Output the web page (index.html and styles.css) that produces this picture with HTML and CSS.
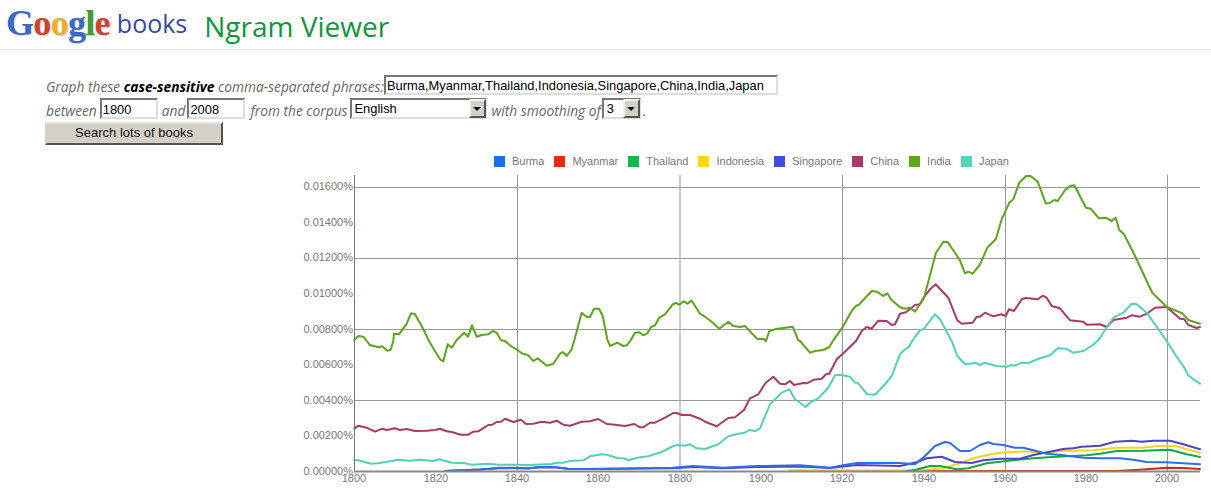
FILE: index.html
```html
<!DOCTYPE html>
<html lang="en">
<head>
    <meta charset="UTF-8">
    <title>Google Books Ngram Viewer</title>
    <link rel="stylesheet" href="styles.css">
</head>
<body>
    <div class="header">
        <div class="logo"><span class="c-blue">G</span><span class="c-red">o</span><span class="c-yellow">o</span><span class="c-blue">g</span><span class="c-green">l</span><span class="c-red">e</span></div>
        <div class="books">books</div>
        <h1>Ngram Viewer</h1>
    </div>

    <form class="query">
        <div class="row row-phrases">
            <label>Graph these <b>case-sensitive</b> comma-separated phrases:</label>
            <input class="phrases" type="text" value="Burma,Myanmar,Thailand,Indonesia,Singapore,China,India,Japan">
        </div>
        <div class="row row-years">
            <label class="between">between</label>
            <input class="year" type="text" value="1800">
            <label class="and">and</label>
            <input class="year" type="text" value="2008">
            <label class="corpus-label">from the corpus</label>
            <div class="select corpus"><span>English</span><i class="arrow"></i></div>
            <label class="smoothing-label">with smoothing of</label>
            <div class="select smoothing"><span>3</span><i class="arrow"></i></div>
            <label class="dot">.</label>
        </div>
        <button type="button">Search lots of books</button>
    </form>

    <div class="chart">
        <ul class="legend">
            <li><i class="swatch burma"></i>Burma</li>
            <li><i class="swatch myanmar"></i>Myanmar</li>
            <li><i class="swatch thailand"></i>Thailand</li>
            <li><i class="swatch indonesia"></i>Indonesia</li>
            <li><i class="swatch singapore"></i>Singapore</li>
            <li><i class="swatch china"></i>China</li>
            <li><i class="swatch india"></i>India</li>
            <li><i class="swatch japan"></i>Japan</li>
        </ul>
        <svg class="plot" width="921" height="326" viewBox="290 172 921 326">
            <g class="grid">
                <path d="M517.5 174V470M680 174V470M842.5 174V470M1005.5 174V470M1167.5 174V470"/>
                <path d="M354 186.5H1200M354 257.5H1200M354 328.5H1200M354 399.5H1200"/>
            </g>
            <g class="ylabels">
                <text x="353" y="189">0.01600%</text>
                <text x="353" y="225">0.01400%</text>
                <text x="353" y="260">0.01200%</text>
                <text x="353" y="296">0.01000%</text>
                <text x="353" y="332">0.00800%</text>
                <text x="353" y="367">0.00600%</text>
                <text x="353" y="403">0.00400%</text>
                <text x="353" y="438">0.00200%</text>
                <text x="353" y="474">0.00000%</text>
            </g>
            <g class="xlabels">
                <text x="354" y="481">1800</text>
                <text x="436" y="481">1820</text>
                <text x="517" y="481">1840</text>
                <text x="598" y="481">1860</text>
                <text x="680" y="481">1880</text>
                <text x="761" y="481">1900</text>
                <text x="842" y="481">1920</text>
                <text x="924" y="481">1940</text>
                <text x="1005" y="481">1960</text>
                <text x="1086" y="481">1980</text>
                <text x="1167" y="481">2000</text>
            </g>
            <polyline class="line myanmar" points="900,470 1116.7,470 1140,468.7 1166.7,466.7 1183.3,467 1200,468"/>
            <polyline class="line indonesia" points="790,469.3 906.7,469.5 926.7,468.7 943.3,467.3 956.7,463.3 975,456.7 993.3,452.7 1010,451 1025,450.3 1043.3,452 1063.3,450 1093.3,449.3 1116.7,446.7 1143.3,446.7 1156.7,445 1176.7,445.3 1186.7,448.3 1200,451.7"/>
            <polyline class="line thailand" points="906.7,470 915,469 930,465 940,465 956.7,468.3 968.3,467.3 986.7,462.3 1006.7,460 1033.3,457.3 1056.7,455.7 1086.7,454.3 1100,452.7 1116.7,450 1143.3,449.7 1170,448.7 1186.7,453.3 1200,456"/>
            <polyline class="line singapore" points="445,470 480,468.5 501.7,466.7 528,467.3 538,466.5 555,466.5 568,467.7 590,468 673,467.2 693,466 723,467.2 757,466 800,465.5 830,467 843,465.5 857,464 900,465 916.7,461.3 926.7,457.3 941.7,455.7 955,461 971.7,462 983.3,459.3 1000,457.7 1020,457.7 1033.3,454 1048.3,451 1063.3,448 1073.3,447.3 1081.7,445.7 1100,444.7 1115,440.7 1131.7,439.7 1141.7,440.7 1153.3,439.7 1170,439.7 1183.3,443.3 1200,448.3"/>
            <polyline class="line burma" points="445,470 480,468.5 501.7,467 528,467.5 538,466 555,466 568,467.7 590,468 673,466.7 693,465 723,466.7 757,465 800,464.3 830,466.7 843,464.3 857,462 900,462 915,463.3 925,455 935,445 945,441 950,442 960,450 970,450 980,444 988.3,441.3 993.3,443 1003.3,444 1015,446.7 1023.3,446.7 1033.3,449.3 1046.7,452.7 1063.3,454.3 1083.3,456.7 1100,457.3 1120,457.3 1133.3,458.7 1146.7,461 1166.7,461.3 1183.3,462.3 1200,463.3"/>
            <polyline class="line china" points="354.3,427.3 358.3,424.7 366.7,426.7 375,430.7 382.3,427.7 386.7,429 395,427.3 400,429 406.7,428 415,430 426.7,429.7 435,429 440,427.7 446.7,430.3 451.7,431 460.7,433.7 468.3,433.7 473.3,430.7 478.3,430.3 488.3,424 492.3,423.7 496.7,421 501,420.7 505,417.7 513.3,421 521,418.7 526,423 533.3,422.7 541.7,420.7 550,421.7 556.7,419.7 563.3,423.7 570,424.7 581.7,420.7 590,420.3 598.3,418 606.7,423 615,423.7 625,425 634.3,423 640,426.3 643.3,426.3 650,421.7 655,421.7 665,416.7 673.3,412 676.7,412 681.7,414 690,414 700,417.7 705,420.7 716.7,425.3 728.3,417 735,416.3 744,409 750,397.3 758.3,393.3 765.7,381.7 773.3,375.7 780,382.7 785,383.3 790,380 794,384 803.3,382 806.7,382.3 814,378.7 821.7,377.7 826,373.3 829.3,372.7 836.7,358.3 842.3,353.3 856,340 861.7,330 866.7,326 871.7,327.7 878.3,319.7 886.7,320 891.7,324 895,323.3 900,312.7 906,311.3 915,304 920,303.3 924,296 930,288.3 935.7,283.3 948.3,296.7 957.3,319.3 961.7,322.7 972.7,321.7 976.7,315.7 980,315.7 985,311.7 993.3,315.3 1001.7,313.3 1005.7,315 1009,308.3 1014,310 1021.7,298.3 1025.7,297 1037.7,298.3 1042.7,294.7 1046.7,296.7 1051.7,305 1060,307.3 1070,319.3 1083.3,320.7 1086.7,323.7 1100,323.3 1106.7,326 1113.3,319 1126.7,316.7 1131.7,314.3 1140,315.7 1146.7,312.7 1155,306.7 1166.7,306 1180,317.7 1184.3,318.3 1188.3,324 1196.7,327 1200,326"/>
            <polyline class="line india" points="354.3,339 358.3,335 363.3,335.7 366.7,340 370,344 378.3,346.3 382.3,345.3 387.3,349.7 390.7,348.7 393.3,340 394,332.7 399,333.3 406.7,322.7 411,312.3 415,313.3 421.7,325 429,340 433.3,347.3 440,358.3 443.3,360.3 447.7,343.3 451.7,346.7 456.7,339 464.3,331.7 468,335.7 472,324.3 476.7,335.7 481.7,334 488.3,333.3 492.7,330 496.7,331.7 501,339.3 505,340 511.7,345.7 516.7,348.3 521.7,352.3 528.3,354.3 533.3,360 537.7,357.3 546.7,364.7 553.3,362.7 560,352.7 562.7,351 566.7,355 571.7,348.3 575,336.7 581.7,311.7 586.7,316 590,316 594,307.7 599,307.7 602.7,315 607.3,338.3 610,345 617.3,341.7 623.3,345 626.7,344.3 630.7,339.3 635,331.7 639.3,331.3 643.3,334.3 647.3,332.3 651,326 655,324.3 659.3,316.7 665,313.3 672.7,303.3 676,302 679.3,303.7 684,300.3 687.3,302.7 691.7,299.7 700,312.7 705,315.7 711.7,320.7 719.3,327.7 728.3,320.7 733.3,325 740,326 745,325 751.7,332.3 757.7,338.3 763.3,337.7 766,340 769.3,330 776,328 792.7,325.7 798.3,339.3 800,340 810,351.7 815,350 823.3,349 829.3,346 833.3,339.3 842.3,326.7 851.7,310 856,305 859.3,303.3 871.7,290 876.7,290.7 883.3,295 887.3,292.3 891.7,299.3 900,306 904,307.7 910,306.7 915,310.7 920.7,301.7 924,296.7 936,251.7 943.3,240.7 947.7,241 960,259.3 965,272.3 968.3,270.7 972.7,272.7 980,263.3 987.3,246.7 991.7,242.3 996,237.7 1001.7,218.3 1009.3,201.7 1013.3,198.3 1019.3,181.7 1026,175 1030.7,175 1037.7,180.7 1045.7,202.3 1049.3,202.3 1054,199 1057.7,200 1065,189.3 1070,185 1074.3,184.3 1086,206.7 1090.7,207.7 1099,217.3 1105.7,216.7 1111.7,220 1115.7,216.7 1119.3,229 1124,233.3 1135,255 1146.7,280 1152.3,291.7 1166.7,306 1176.7,310 1182.3,312.3 1188.3,319 1200,322.7"/>
            <polyline class="line japan" points="354.3,459 358.3,459.3 371,462.7 378.3,462.3 390,460.3 398.3,458.7 410,459.7 420,458.7 433.3,460 439.3,458.3 451.7,461.7 465,462.3 471.7,463.7 488.3,462.7 498.3,463.7 516.7,463.7 528.3,464 551.7,463 556.7,461.7 563.3,461.7 570,460 583.3,459.3 590,455.3 601.7,453.3 606.7,453.7 618.3,457.3 623.3,457.3 628.3,459 640,456.3 648.3,455.3 661.7,451 673.3,445 678.3,444 685,444.7 690,443.3 696.7,447.3 705,448 718.3,443.3 728.3,435.3 738.3,432.7 745,431.7 749.3,429 755,430 760,427.3 770,403.3 781.7,391.7 789.3,388.3 795,398.3 805.7,406 810,401.7 818.3,397.3 828.3,386.7 835,374.3 840,373.7 850,375.7 855,381.7 857.7,381.7 867.3,393.3 875,393.7 885,383.3 891.7,375 900,353.3 905,348.3 908.3,346.7 912.7,339.3 920,329.3 923.3,328.3 935,313.3 940,318.3 951.7,340 957.3,355 965,363.3 976,362 980,364 984.3,361.7 996.7,365 1006.7,365.7 1011.7,364 1015,364.7 1021.7,361.7 1028.3,362 1040,357.3 1050,354.3 1057.7,347.3 1066,347.7 1073.3,351.7 1083.3,350 1091.7,345 1098.3,339.3 1113.3,316.7 1123.3,311.7 1131.7,302.7 1136.7,303.3 1146.7,311.7 1166.7,340 1175,353.3 1183.3,365 1188.3,374.3 1193.3,378.3 1200,382.7"/>
            <path class="axis" d="M354.5 174V470"/>
            <path class="baseline" d="M354 470.5H1200"/>
        </svg>
    </div>
</body>
</html>
```

FILE: styles.css
```css
html, body {
    height: 100%;
    overflow: hidden;
}
body {
    margin: 0;
    background: #fff;
    font-family: "Open Sans", sans-serif;
    color: #666;
}

/* header */
.header {
    display: flex;
    align-items: flex-start;
    height: 49px;
    padding-left: 6px;
    border-bottom: 1px solid #e8e8e8;
}
.logo {
    margin-top: 1px;
    font-family: "Liberation Serif", serif;
    font-size: 36px;
    font-weight: 700;
    line-height: 44px;
    letter-spacing: -0.7px;
    text-shadow: 1px 1px 1px rgba(0,0,0,0.2);
}
.c-blue { color: #3768c8; }
.c-red { color: #d0402c; }
.c-yellow { color: #e9ae25; }
.c-green { color: #3f9c3c; }
.books {
    margin: 6px 0 0 7px;
    font-size: 25px;
    color: #3848a6;
}
h1 {
    margin: 7px 0 0 17px;
    font-size: 28px;
    font-weight: 400;
    color: #10973a;
}

/* form */
.query {
    padding: 25px 0 0 45px;
    font-size: 13.75px;
    font-style: italic;
}
.row {
    display: flex;
    align-items: center;
}
.row-phrases {
    height: 20px;
    margin-bottom: 3px;
}
.row-years {
    height: 21px;
    margin-bottom: 3px;
}
.row label {
    white-space: nowrap;
    padding-top: 3px;
}
.row b {
    color: #000;
    font-weight: 700;
}
.row label:first-child {
    padding-left: 1px;
}
.row input, .select {
    box-sizing: border-box;
    height: 100%;
    border: 2px solid;
    border-color: #777 #ddd #ddd #777;
    background: #fff;
    font: 12.9px "Liberation Sans", sans-serif;
    color: #000;
    padding: 0 1px;
    margin: 0;
    outline: none;
}
.row-years input {
    padding-top: 1px;
}
.phrases {
    width: 394px;
}
.year {
    width: 58px;
}
.between {
    margin-right: 3px;
}
.and {
    margin: 0 2px 0 4px;
}
.corpus-label {
    margin: 0 2px 0 5px;
}
.select {
    display: flex;
    align-items: center;
    justify-content: space-between;
    padding: 0 0 0 3px;
}
.corpus {
    width: 137px;
}
.smoothing {
    width: 39px;
}
.smoothing-label {
    margin: 0 1px 0 5px;
}
.dot {
    margin-left: 2px;
}
.arrow {
    position: relative;
    width: 17px;
    height: 19px;
    margin-right: -1px;
    background: #d4d0c8;
    border: 2px solid;
    border-color: #f4f2ee #555 #555 #f4f2ee;
    box-sizing: border-box;
}
.arrow::after {
    content: "";
    position: absolute;
    left: 2px;
    top: 6px;
    border: 4px solid transparent;
    border-top: 4px solid #000;
    border-bottom: 0;
}
button {
    display: block;
    width: 178px;
    height: 23px;
    padding: 0 0 2px;
    background: #d4d0c8;
    border: 2px solid;
    border-color: #e6e3dd #55534f #55534f #d4d0c8;
    font: 13px "Liberation Sans", sans-serif;
    color: #111;
}

/* chart */
.chart {
    margin-left: 290px;
}
.legend {
    display: flex;
    list-style: none;
    margin: 11px 0 0 204px;
    padding: 0;
    font: 11px "Liberation Sans", sans-serif;
    line-height: 11px;
    color: #777;
}
.legend li {
    display: flex;
    align-items: center;
    margin-right: 10px;
}
.swatch {
    width: 11px;
    height: 11px;
    margin-right: 7px;
}
.swatch.burma { background: #1a6ff0; }
.swatch.myanmar { background: #e62a0a; }
.swatch.thailand { background: #0cb94a; }
.swatch.indonesia { background: #ffd800; }
.swatch.singapore { background: #3a4ee8; }
.swatch.china { background: #a93a68; }
.swatch.india { background: #5ca61c; }
.swatch.japan { background: #55d4b8; }

.plot {
    display: block;
    margin-top: 6px;
}
.grid path {
    fill: none;
    stroke: #999;
    stroke-width: 1;
}
.axis {
    stroke: #777;
    stroke-width: 1;
}
.baseline {
    stroke: #888;
    stroke-width: 2;
}
.ylabels text, .xlabels text {
    font: 11px "Liberation Sans", sans-serif;
    fill: #777;
}
.ylabels text {
    text-anchor: end;
}
.xlabels text {
    text-anchor: middle;
}
.line {
    fill: none;
    stroke-width: 2;
    stroke-linejoin: round;
    stroke-linecap: round;
}
.line.burma { stroke: #2b6fe8; }
.line.myanmar { stroke: #cf2a12; }
.line.thailand { stroke: #12a84a; }
.line.indonesia { stroke: #f5d31e; }
.line.singapore { stroke: #4a45c8; }
.line.china { stroke: #a93a68; }
.line.india { stroke: #5ca61c; }
.line.japan { stroke: #55d0b8; }
```
